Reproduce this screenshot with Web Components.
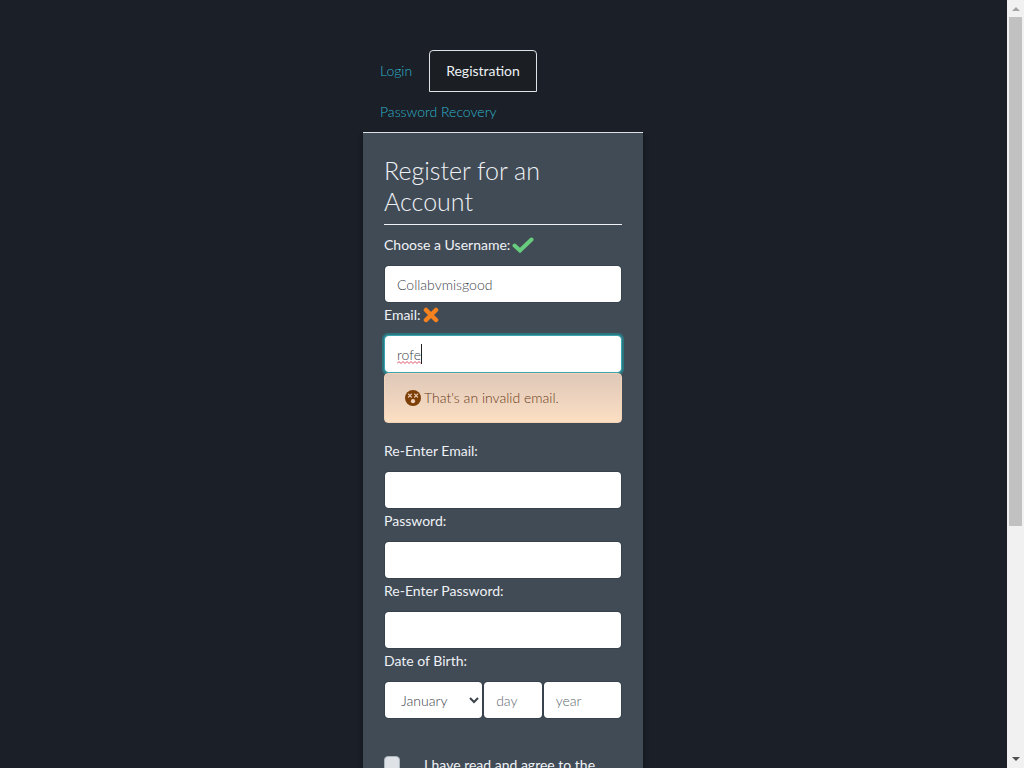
<!DOCTYPE html>
<html lang="en">
<head>
<meta charset="utf-8">
<title>Register for an Account</title>
<style>
  body {
    margin: 0;
    background: #1b1f27;
    color: #eef1f5;
    font: 300 14px/24px Lato, sans-serif;
  }
</style>
</head>
<body>
<page-shell>
  <account-tabs></account-tabs>
  <register-panel heading="Register for an Account">
    <form-field label="Choose a Username:" value="Collabvmisgood" status="valid"></form-field>
    <form-field label="Email:" value="rofe" status="invalid" active></form-field>
    <alert-message>That's an invalid email.</alert-message>
    <form-field label="Re-Enter Email:"></form-field>
    <form-field label="Password:" type="password"></form-field>
    <form-field label="Re-Enter Password:" type="password"></form-field>
    <birth-date></birth-date>
    <agree-check>I have read and agree to the</agree-check>
  </register-panel>
</page-shell>

<script>
const inputStyle = `
  *{
    box-sizing: border-box;
  }

  :host{
    display: block;
  }

  label, legend{
    display: block;
    padding: 0;
    margin-bottom: 8px;
    font-weight: 400;
  }

  input, select{
    width: 100%;
    min-width: 0;
    height: 38px;
    margin: 0;
    padding: 6px 12px;
    border: 1px solid #38424d;
    border-radius: 4px;
    outline: none;
    background-color: #fff;
    background-clip: padding-box;
    color: #3c4349;
    font: inherit;
  }

  input::placeholder{
    color: #60686f;
    opacity: 1;
  }
`;

function define(name, html, setup) {
  const template = document.createElement('template');
  template.innerHTML = html;

  customElements.define(name, class extends HTMLElement {
    constructor() {
      super();
      this.attachShadow({ mode: 'open' });
      this.shadowRoot.appendChild(template.content.cloneNode(true));
      if (setup) setup(this, this.shadowRoot);
    }
  });
}

define('page-shell', `
<style>
  :host{
    display: flex;
    height: 100vh;
    overflow: hidden;
  }

  main{
    flex: 1;
    overflow: hidden;
    padding: 50px 1px 0 0;
  }

  .column{
    max-width: 280px;
    margin: 0 auto;
  }
</style>
<main><div class="column"><slot></slot></div></main>
<scroll-track></scroll-track>`);

define('scroll-track', `
<style>
  :host{
    display: flex;
    flex-direction: column;
    width: 17px;
    background: #f1f1f1;
  }

  svg{
    display: block;
    flex: none;
  }

  .track{
    flex: 1;
    padding: 0 2px;
  }

  .thumb{
    height: 69.4%;
    background: #c1c1c1;
  }
</style>
<svg width="17" height="17"><path d="M5 11l4-4 4 4z" fill="#a3a3a3"/></svg>
<div class="track"><div class="thumb"></div></div>
<svg width="17" height="17"><path d="M5 6l4 4 4-4z" fill="#505050"/></svg>`);

define('account-tabs', `
<style>
  :host{
    display: block;
  }

  nav{
    display: flex;
    flex-wrap: wrap;
    border-bottom: 1px solid #dee2e6;
  }

  a{
    margin-bottom: -1px;
    padding: 8px 16px;
    border: 1px solid transparent;
    border-radius: 4px 4px 0 0;
    color: #2fb4cb;
    text-decoration: none;
  }

  a.active{
    border-color: #dee2e6;
    background: #1b1f23;
    color: #eef1f5;
    font-weight: 400;
  }
</style>
<nav>
  <a href="#login">Login</a>
  <a href="#registration" class="active" aria-current="page">Registration</a>
  <a href="#recovery">Password Recovery</a>
</nav>`);

define('register-panel', `
<style>
  :host{
    display: block;
    padding: 22px 21px;
    background: #414b56;
    box-shadow: 0 0 4px #10171d;
    clip-path: inset(0 -8px -8px -8px);
  }

  h1{
    margin: 0 0 8px;
    padding-bottom: 7px;
    border-bottom: 1px solid #eef1f5;
    font-size: 25px;
    font-weight: 300;
    line-height: 31px;
  }
</style>
<h1></h1>
<form><slot></slot></form>`, (el, root) => {
  root.querySelector('h1').textContent = el.getAttribute('heading');
});

define('status-icon', `
<style>
  :host{
    display: block;
  }

  svg{
    display: none;
  }

  :host([kind="valid"]) .valid, :host([kind="invalid"]) .invalid{
    display: block;
  }
</style>
<svg class="valid" width="22" height="17" viewBox="0 0 22 17"><path d="M2.5 8.5l5.5 5L19.5 2.5" fill="none" stroke="#67cc7e" stroke-width="4" stroke-linecap="round"/></svg>
<svg class="invalid" width="16" height="16" viewBox="0 0 16 16"><path d="M3 3l10 10M13 3L3 13" fill="none" stroke="#f5811f" stroke-width="4.5" stroke-linecap="round"/></svg>`);

define('form-field', `
<style>${inputStyle}
  label{
    display: flex;
    align-items: center;
    gap: 2px;
  }

  .box{
    position: relative;
  }

  .caret{
    display: none;
    position: absolute;
    left: 13px;
    top: 9px;
    height: 20px;
    border-right: 1px solid #222;
    pointer-events: none;
  }

  .caret svg{
    position: absolute;
    left: 0;
    bottom: 0;
    width: 100%;
    height: 3px;
  }

  :host([active]) .caret{
    display: block;
  }

  :host([active]) input{
    border-color: #3aa5ae;
    box-shadow: 0 0 0 2px #2c747e;
  }
</style>
<label for="field"><span></span><status-icon></status-icon></label>
<div class="box">
  <input id="field" type="text">
  <div class="caret" aria-hidden="true">
    <svg viewBox="0 0 24 3" preserveAspectRatio="none"><path d="M0 2.5l2-2 2 2 2-2 2 2 2-2 2 2 2-2 2 2 2-2 2 2 2-2 2 2" fill="none" stroke="#d95069"/></svg>
  </div>
</div>`, (el, root) => {
  const input = root.querySelector('input');
  root.querySelector('span').textContent = el.getAttribute('label');
  input.type = el.getAttribute('type') || 'text';
  input.value = el.getAttribute('value') || '';
  root.querySelector('status-icon').setAttribute('kind', el.getAttribute('status') || '');
  if (el.hasAttribute('active')) {
    // the caret sits at the end of the typed value
    const pen = document.createElement('canvas').getContext('2d');
    pen.font = '300 14px Lato, sans-serif';
    root.querySelector('.caret').style.width = Math.ceil(pen.measureText(input.value).width) + 'px';
  }
});

define('alert-message', `
<style>
  :host{
    position: relative;
    display: flex;
    align-items: center;
    gap: 3px;
    margin-bottom: 16px;
    padding: 12px 20px;
    border: 1px solid #f2d3b8;
    border-radius: 4px;
    background: linear-gradient(#dfc8b9, #fbdfc3);
    color: #6b3a18;
  }
</style>
<svg width="16" height="16" viewBox="0 0 16 16" aria-hidden="true">
  <circle cx="8" cy="8" r="8" fill="#7c3f08"/>
  <path d="M3.4 4.2l3 3M6.4 4.2l-3 3M9.6 4.2l3 3M12.6 4.2l-3 3" stroke="#f0d3bd" stroke-width="1.2" stroke-linecap="round"/>
  <circle cx="8" cy="11.2" r="2.1" fill="#f0d3bd"/>
</svg>
<span><slot></slot></span>`);

define('birth-date', `
<style>${inputStyle}
  fieldset{
    margin: 0;
    padding: 0;
    border: 0;
    min-width: 0;
  }

  .row{
    display: grid;
    grid-template-columns: 5fr 3fr 4fr;
  }
</style>
<fieldset>
  <legend>Date of Birth:</legend>
  <div class="row">
    <select aria-label="Month"><option>January</option><option>February</option><option>March</option></select>
    <input type="text" placeholder="day" aria-label="Day">
    <input type="text" placeholder="year" aria-label="Year">
  </div>
</fieldset>`);

define('agree-check', `
<style>
  :host{
    display: block;
    margin-top: 34px;
  }

  label{
    display: flex;
    gap: 24px;
    font-weight: 400;
  }

  input{
    appearance: none;
    flex: none;
    width: 16px;
    height: 16px;
    margin: 3px 0 0;
    border: 1px solid #adb5bd;
    border-radius: 4px;
    background: #dee2e6;
  }
</style>
<label><input type="checkbox"><span><slot></slot></span></label>`);
</script>
</body>
</html>
